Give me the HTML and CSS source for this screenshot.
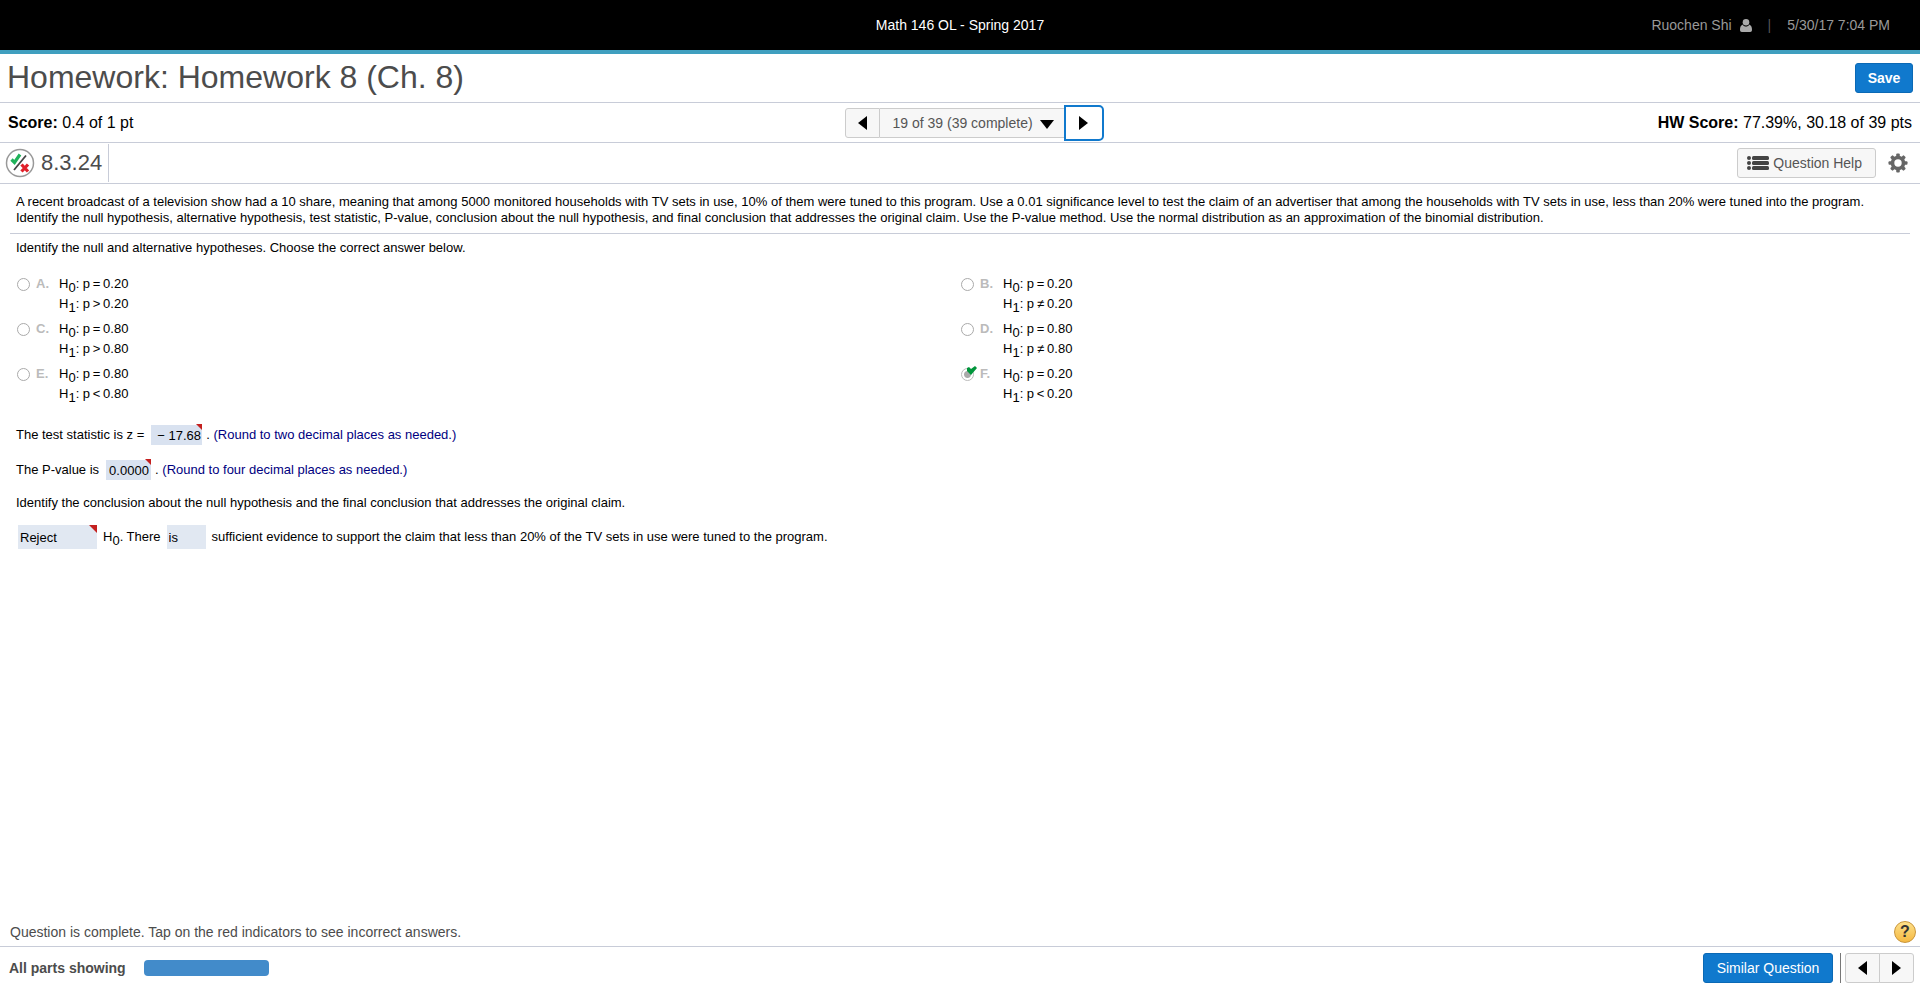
FILE: index.html
```html
<!DOCTYPE html>
<html lang="en">
<head>
    <meta charset="UTF-8">
    <meta name="viewport" content="width=device-width, initial-scale=1.0">
    <title>Homework 8 (Ch. 8)</title>
    <link rel="stylesheet" href="styles.css">
</head>
<body>
    <header class="top-bar">
        <div class="course">Math 146 OL - Spring 2017</div>
        <div class="user-info">
            <span>Ruochen Shi</span>
            <svg class="user-icon" width="12" height="13" viewBox="0 0 12 13"><circle cx="6" cy="3.3" r="3.3"/><path d="M2.6 5.6C3.4 7 4.6 7.6 6 7.6S8.6 7 9.4 5.6C11.3 6.600 12 8.500 12 10.800C12 12.300 11.300 13 10.200 13H1.800C.7 13 0 12.300 0 10.800C0 8.500 .7 6.600 2.600 5.600Z"/></svg>
            <span class="divider">|</span>
            <span>5/30/17 7:04 PM</span>
        </div>
    </header>

    <div class="title-row">
        <h1>Homework: Homework 8 (Ch. 8)</h1>
        <button class="btn btn-primary btn-save">Save</button>
    </div>

    <div class="score-row">
        <div><b>Score:</b> 0.4 of 1 pt</div>
        <div class="pager">
            <button class="btn btn-arrow" aria-label="Previous question"><svg width="9" height="14" viewBox="0 0 9 14"><path d="M9 0V14L0 7Z"/></svg></button>
            <div class="pager-select">
                <select aria-label="Question">
                    <option>19 of 39 (39 complete)</option>
                </select>
                <svg class="caret" width="14" height="9" viewBox="0 0 14 9"><path d="M0 0H14L7 9Z"/></svg>
            </div>
            <button class="btn btn-arrow focused" aria-label="Next question"><svg width="9" height="14" viewBox="0 0 9 14"><path d="M0 0V14L9 7Z"/></svg></button>
        </div>
        <div class="hw-score"><b>HW Score:</b> 77.39%, 30.18 of 39 pts</div>
    </div>

    <div class="question-row">
        <div class="question-number">
            <svg width="30" height="30" viewBox="0 0 30 30">
                <circle cx="15" cy="15" r="13.5" fill="#fff" stroke="#999" stroke-width="1.5"/>
                <path d="M9 22L21 7.5" stroke="#444" stroke-width="1.8"/>
                <path d="M6.500 11.500L9.500 14.500L15 6.500" fill="none" stroke="#1fb25a" stroke-width="3.2"/>
                <path d="M16.500 16.500L23 23.500M23 16.500L16.500 23.500" stroke="#e0202a" stroke-width="3.2"/>
            </svg>
            <span>8.3.24</span>
        </div>
        <div class="question-tools">
            <button class="btn btn-help">
                <svg width="22" height="16" viewBox="0 0 22 16" fill="#444"><circle cx="2" cy="3" r="2"/><circle cx="2" cy="8" r="2"/><circle cx="2" cy="13" r="2"/><rect x="5" y="1" width="17" height="4" rx="1.5"/><rect x="5" y="6" width="17" height="4" rx="1.5"/><rect x="5" y="11" width="17" height="4" rx="1.5"/></svg>
                Question Help
            </button>
            <button class="btn-gear" aria-label="Settings">
                <svg width="20" height="20" viewBox="-10 -10 20 20">
                    <g fill="#666">
                        <rect x="-1.8" y="-9.5" width="3.6" height="19" rx="1"/>
                        <rect x="-1.8" y="-9.5" width="3.6" height="19" rx="1" transform="rotate(45)"/>
                        <rect x="-1.8" y="-9.5" width="3.6" height="19" rx="1" transform="rotate(90)"/>
                        <rect x="-1.8" y="-9.5" width="3.6" height="19" rx="1" transform="rotate(135)"/>
                        <circle r="7.3"/>
                    </g>
                    <circle r="3.7" fill="#fff"/>
                </svg>
            </button>
        </div>
    </div>

    <main class="content">
        <p class="passage">A recent broadcast of a television show had a 10 share, meaning that among 5000 monitored households with TV sets in use, 10% of them were tuned to this program. Use a 0.01 significance level to test the claim of an advertiser that among the households with TV sets in use, less than 20% were tuned into the program. Identify the null hypothesis, alternative hypothesis, test statistic, P-value, conclusion about the null hypothesis, and final conclusion that addresses the original claim. Use the P-value method. Use the normal distribution as an approximation of the binomial distribution.</p>

        <div class="parts">
            <p>Identify the null and alternative hypotheses. Choose the correct answer below.</p>

            <div class="choices">
                <label class="choice">
                    <input type="radio" name="hypothesis" disabled>
                    <span class="letter">A.</span>
                    <span>H<sub>0</sub>: p<i>=</i>0.20<br>H<sub>1</sub>: p<i>&gt;</i>0.20</span>
                </label>
                <label class="choice">
                    <input type="radio" name="hypothesis" disabled>
                    <span class="letter">B.</span>
                    <span>H<sub>0</sub>: p<i>=</i>0.20<br>H<sub>1</sub>: p<i>≠</i>0.20</span>
                </label>
                <label class="choice">
                    <input type="radio" name="hypothesis" disabled>
                    <span class="letter">C.</span>
                    <span>H<sub>0</sub>: p<i>=</i>0.80<br>H<sub>1</sub>: p<i>&gt;</i>0.80</span>
                </label>
                <label class="choice">
                    <input type="radio" name="hypothesis" disabled>
                    <span class="letter">D.</span>
                    <span>H<sub>0</sub>: p<i>=</i>0.80<br>H<sub>1</sub>: p<i>≠</i>0.80</span>
                </label>
                <label class="choice">
                    <input type="radio" name="hypothesis" disabled>
                    <span class="letter">E.</span>
                    <span>H<sub>0</sub>: p<i>=</i>0.80<br>H<sub>1</sub>: p<i>&lt;</i>0.80</span>
                </label>
                <label class="choice">
                    <input type="radio" name="hypothesis" disabled checked>
                    <svg class="tick" width="10" height="9" viewBox="0 0 10 9"><path d="M0 2L2 1L4 3L8 0L10 2L4 9L0 5Z"/></svg>
                    <span class="letter">F.</span>
                    <span>H<sub>0</sub>: p<i>=</i>0.20<br>H<sub>1</sub>: p<i>&lt;</i>0.20</span>
                </label>
            </div>

            <div class="answer-line">
                <label for="zStat">The test statistic is z =</label>
                <span class="answer wrong"><input type="text" id="zStat" class="z-stat" value="− 17.68" readonly></span>
                <span>. <span class="hint">(Round to two decimal places as needed.)</span></span>
            </div>
            <div class="answer-line">
                <label for="pValue">The P-value is</label>
                <span class="answer wrong"><input type="text" id="pValue" class="p-value" value="0.0000" readonly></span>
                <span>. <span class="hint">(Round to four decimal places as needed.)</span></span>
            </div>
            <p class="conclusion">Identify the conclusion about the null hypothesis and the final conclusion that addresses the original claim.</p>
            <div class="answer-line drop-line">
                <span class="answer wrong big"><select class="decision" aria-label="Decision"><option>Reject</option></select></span>
                <span>H<sub>0</sub>. There</span>
                <span class="answer"><select class="verb" aria-label="Is or is not"><option>is</option></select></span>
                <span>sufficient evidence to support the claim that less than 20% of the TV sets in use were tuned to the program.</span>
            </div>
        </div>
    </main>

    <div class="status-row">
        <span>Question is complete. Tap on the red indicators to see incorrect answers.</span>
        <button class="btn-round" aria-label="Help">?</button>
    </div>

    <footer class="footer">
        <b>All parts showing</b>
        <div class="progress"></div>
        <button class="btn btn-primary btn-similar">Similar Question</button>
        <div class="pager">
            <button class="btn btn-arrow" aria-label="Previous question"><svg width="9" height="14" viewBox="0 0 9 14"><path d="M9 0V14L0 7Z"/></svg></button>
            <button class="btn btn-arrow last" aria-label="Next question"><svg width="9" height="14" viewBox="0 0 9 14"><path d="M0 0V14L9 7Z"/></svg></button>
        </div>
    </footer>
</body>
</html>
```
FILE: styles.css
```css
* {
    box-sizing: border-box;
}
body {
    margin: 0;
    min-height: 100vh;
    display: flex;
    flex-direction: column;
    font-family: Arial, "Liberation Sans", sans-serif;
    font-size: 13px;
    line-height: 16px;
    color: #000;
    background: #fff;
}
p {
    margin: 0;
}
button, select, input {
    font-family: inherit;
    font-size: inherit;
    color: inherit;
    margin: 0;
}
svg {
    display: block;
    flex-shrink: 0;
}

/* header */
.top-bar {
    display: grid;
    grid-template-columns: 1fr auto 1fr;
    align-items: center;
    height: 54px;
    padding: 0 30px;
    background: #000;
    border-bottom: 4px solid #3f9fbf;
    font-size: 14px;
}
.course {
    grid-column: 2;
    color: #fff;
}
.user-info {
    display: flex;
    align-items: center;
    justify-content: flex-end;
    color: #999;
}
.user-icon {
    margin-left: 8px;
    fill: #aaa;
}
.divider {
    margin: 0 16px;
    color: #555;
}
.title-row, .score-row, .question-row {
    display: flex;
    align-items: center;
    justify-content: space-between;
    padding: 0 8px;
    border-bottom: 1px solid #c8ccd8;
}
.title-row {
    height: 49px;
    padding: 0 7px;
}
h1 {
    margin: 0;
    padding-bottom: 2px;
    font-size: 32px;
    line-height: 40px;
    font-weight: normal;
    color: #4c4c4c;
}
.score-row {
    display: grid;
    grid-template-columns: 1fr auto 1fr;
    height: 40px;
    font-size: 16px;
}
.score-row .pager {
    margin-left: 28px;
}
.hw-score {
    text-align: right;
}
.question-row {
    height: 41px;
    padding-left: 5px;
}
.question-number {
    display: flex;
    align-items: center;
    gap: 6px;
    height: 38px;
    padding-right: 6px;
    border-right: 1px solid #c8ccd8;
    font-size: 22px;
    color: #4c4c4c;
}
.question-tools {
    display: flex;
    align-items: center;
    gap: 12px;
    padding-right: 4px;
}

/* buttons */
.btn {
    display: flex;
    align-items: center;
    justify-content: center;
    height: 30px;
    padding: 0 12px;
    border: 1px solid #ccc;
    border-radius: 3px;
    background: #f7f7f7;
    font-size: 14px;
    color: #555;
}
.btn-primary {
    background: #1079cd;
    border-color: #0b69b5;
    color: #fff;
}
.btn-save {
    width: 58px;
    font-weight: bold;
}
.btn-help {
    gap: 4px;
    padding: 0 13px 0 9px;
}
.btn-gear {
    padding: 0;
    border: none;
    background: none;
}
.pager {
    display: flex;
    align-items: center;
}
.btn-arrow {
    width: 35px;
    padding: 0;
    border-radius: 3px 0 0 3px;
}
.btn-arrow svg {
    fill: #000;
}
.btn-arrow.last {
    margin-left: -1px;
    border-radius: 0 3px 3px 0;
}
.btn-arrow.focused {
    width: 40px;
    height: 36px;
    border: 2px solid #1079cd;
    border-radius: 0 5px 5px 0;
    background: #fff;
}
.pager-select {
    position: relative;
}
.pager-select select {
    appearance: none;
    width: 184px;
    height: 30px;
    padding: 0 13px;
    border: 1px solid #ccc;
    border-width: 1px 0;
    border-radius: 0;
    background: #f7f7f7;
    font-size: 14px;
    color: #555;
}
.caret {
    position: absolute;
    right: 10px;
    top: 12px;
    pointer-events: none;
}

/* question */
.content {
    flex: 1;
    padding: 10px 10px 0;
}
.passage {
    padding: 0 6px 7px;
    border-bottom: 1px solid #c8ccd8;
}
.parts {
    padding: 6px 6px 0;
}
.choices {
    display: grid;
    grid-template-columns: 1fr 1fr;
    row-gap: 5px;
    margin: 18px 0 21px;
}
.choice {
    position: relative;
    display: flex;
    align-items: flex-start;
    line-height: 20px;
}
.choice input {
    appearance: none;
    width: 13px;
    height: 13px;
    margin: 4px 6px 0 1px;
    border: 1px solid #aaa;
    border-radius: 50%;
}
.choice input:checked {
    border-color: #bbb;
    background: radial-gradient(#aaa 3px, #fff 4px);
}
.choice i {
    display: inline-block;
    width: 13px;
    font-style: normal;
    text-align: center;
}
.letter {
    width: 23px;
    font-weight: bold;
    color: #bbb;
}
.tick {
    position: absolute;
    left: 7px;
    top: 2px;
    fill: #00953b;
}
sub {
    font-size: inherit;
    line-height: 0;
    vertical-align: -4px;
}
.answer-line {
    display: flex;
    align-items: center;
    gap: 4px;
    height: 20px;
    margin-bottom: 15px;
}
.answer-line label {
    padding-right: 3px;
}
.answer {
    position: relative;
    display: flex;
}
.answer input, .answer select {
    appearance: none;
    height: 20px;
    padding: 0 0 0 3px;
    border: none;
    border-radius: 0;
    background: #d9e2f0;
}
.answer .z-stat {
    width: 51px;
    padding-left: 6px;
}
.answer .p-value {
    width: 45px;
}
.answer.wrong::after {
    content: "";
    position: absolute;
    top: -1px;
    right: 0;
    border-top: 6px solid #c4201f;
    border-left: 6px solid transparent;
}
.answer.big::after {
    top: 0;
    border-width: 8px 0 0 8px;
}
.hint {
    color: #000080;
}
.conclusion {
    margin-bottom: 14px;
}
.drop-line {
    gap: 6px;
    height: 24px;
    padding-left: 2px;
}
.answer select {
    height: 24px;
    padding-left: 2px;
    background: #e1e8f2;
}
.decision {
    width: 79px;
}
.verb {
    width: 39px;
}

/* bottom */
.status-row {
    display: flex;
    align-items: center;
    justify-content: space-between;
    height: 28px;
    padding: 0 4px 0 10px;
    font-size: 14px;
    color: #4c4c4c;
}
.btn-round {
    width: 22px;
    height: 22px;
    padding: 0;
    border: 1px solid #c9953a;
    border-radius: 50%;
    background: linear-gradient(#fde08a, #f5b942);
    font-size: 16px;
    font-weight: bold;
    line-height: 20px;
    color: #333;
}
.footer {
    display: flex;
    align-items: center;
    height: 43px;
    padding: 0 6px 0 9px;
    border-top: 1px solid #c8ccd8;
    font-size: 14px;
    color: #4c4c4c;
}
.progress {
    width: 125px;
    height: 16px;
    margin-left: 18px;
    border-radius: 4px;
    background: #428bca;
}
.btn-similar {
    width: 130px;
    margin-left: auto;
}
.footer .pager {
    margin-left: 7px;
    padding-left: 4px;
    border-left: 1px solid #777;
}
```
